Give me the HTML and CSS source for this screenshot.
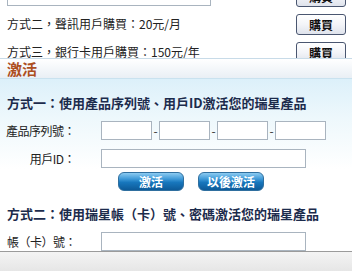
FILE: index.html
```html
<!DOCTYPE html>
<html>
<head>
<meta charset="utf-8">
<link rel="stylesheet" href="styles.css">
</head>
<body>
<div class="page">
  <div class="buy">
    <div class="buy-inner">
      <div class="buy-row">
        <input class="field field-wide" type="text">
        <button class="buy-btn">購買</button>
      </div>
      <div class="buy-row">
        <span class="buy-text">方式二，聲訊用戶購買：20元/月</span>
        <button class="buy-btn">購買</button>
      </div>
      <div class="buy-row">
        <span class="buy-text">方式三，銀行卡用戶購買：150元/年</span>
        <button class="buy-btn">購買</button>
      </div>
    </div>
  </div>
  <div class="section-head">激活</div>
  <div class="activate">
    <h3 class="method">方式一：使用產品序列號、用戶ID激活您的瑞星產品</h3>
    <div class="form-row">
      <span class="label">產品序列號：</span>
      <div class="serial">
        <input class="field field-sn" type="text"><span class="dash">-</span>
        <input class="field field-sn" type="text"><span class="dash">-</span>
        <input class="field field-sn" type="text"><span class="dash">-</span>
        <input class="field field-sn" type="text">
      </div>
    </div>
    <div class="form-row">
      <span class="label">用戶ID：</span>
      <input class="field field-wide" type="text">
    </div>
    <div class="actions">
      <button class="blue-btn">激活</button>
      <button class="blue-btn">以後激活</button>
    </div>
    <h3 class="method method-2">方式二：使用瑞星帳（卡）號、密碼激活您的瑞星產品</h3>
    <div class="form-row">
      <span class="label label-left">帳（卡）號：</span>
      <input class="field field-wide" type="text">
    </div>
  </div>
  <div class="statusbar"></div>
</div>
</body>
</html>
```
FILE: styles.css
```css
html, body {
  margin: 0;
  padding: 0;
  background: #ffffff;
}
body {
  width: 352px;
  height: 271px;
  overflow: hidden;
  font-family: "Noto Sans CJK TC", "Noto Sans CJK SC", sans-serif;
  font-size: 12px;
  color: #333333;
}
.page {
  display: flex;
  flex-direction: column;
  height: 271px;
}
.buy {
  height: 58px;
  overflow: hidden;
  flex: none;
}
.buy-inner {
  margin-top: -18px;
}
.buy-row {
  height: 28px;
  display: flex;
  align-items: center;
  justify-content: space-between;
  padding: 0 6px 0 7px;
}
.buy-text {
  line-height: 14px;
  color: #222;
}
.buy-btn {
  width: 50px;
  height: 21px;
  padding: 0;
  border: 1px solid #4a5670;
  border-radius: 3px;
  background: linear-gradient(#ffffff, #f3f4f8 50%, #dfe3ec);
  font-family: "Noto Sans CJK TC", sans-serif;
  font-size: 12px;
  font-weight: bold;
  color: #111;
  line-height: 17px;
}
.section-head {
  flex: none;
  height: 19px;
  border-top: 1px solid #c8dbe8;
  border-bottom: 1px solid #c9e2ef;
  background: linear-gradient(#ffffff, #e9eff5);
  padding-left: 7px;
  font-size: 15px;
  font-weight: bold;
  color: #ad4f1f;
  line-height: 19px;
}
.activate {
  flex: 1;
  overflow: hidden;
  background: linear-gradient(#dcf0fa 0, #eef8fc 40px, #ffffff 90px);
  padding-top: 15px;
}
.method {
  margin: 0;
  padding-left: 7px;
  font-size: 13px;
  font-weight: bold;
  color: #1c2b4c;
  line-height: 18px;
  height: 18px;
}
.method-2 {
  margin-top: 14px;
}
.form-row {
  display: flex;
  align-items: center;
  margin-top: 9px;
}
.label {
  width: 69px;
  margin-left: 6px;
  margin-right: 26px;
  text-align: right;
  white-space: nowrap;
  letter-spacing: -0.5px;
  line-height: 14px;
  color: #222;
}
.label-left {
  text-align: left;
  margin-left: 7px;
  margin-right: 25px;
}
.serial {
  display: flex;
  align-items: center;
}
.field {
  box-sizing: border-box;
  height: 19px;
  border: 1px solid #a9b4bf;
  background: #ffffff;
  padding: 0;
  margin: 0;
}
.field-sn {
  width: 51px;
}
.field-wide {
  width: 205px;
}
.buy-row .field-wide {
  width: 204px;
  height: 20px;
}
.dash {
  width: 7px;
  text-align: center;
  line-height: 12px;
  color: #333;
}
.actions {
  display: flex;
  gap: 14px;
  padding-left: 118px;
  margin-top: 4px;
}
.blue-btn {
  height: 19px;
  padding: 0;
  border: 1px solid #2f6f9f;
  border-radius: 6px;
  background: linear-gradient(#8ccbf1 0, #3f9ad8 35%, #1877bd 55%, #0d5a98 100%);
  font-family: "Noto Sans CJK TC", sans-serif;
  font-size: 12px;
  font-weight: bold;
  color: #ffffff;
  line-height: 16px;
  width: 66px;
}
.statusbar {
  flex: none;
  height: 19px;
  border-top: 1px solid #9b9b9b;
  background: linear-gradient(#f4f4f4, #e6e6e6);
}
```
